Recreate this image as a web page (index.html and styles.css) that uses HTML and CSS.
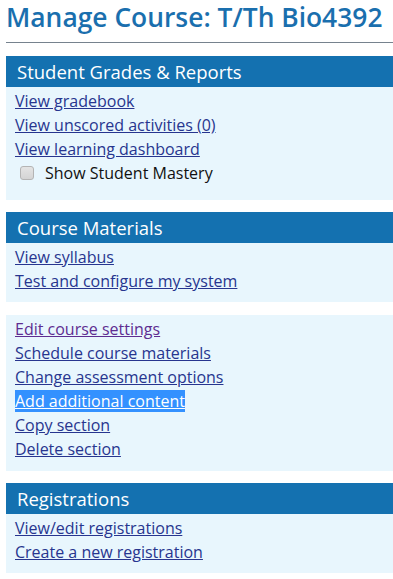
FILE: index.html
```html
<!DOCTYPE html>
<html lang="en">
<head>
    <meta charset="UTF-8">
    <meta name="viewport" content="width=device-width, initial-scale=1.0">
    <title>Manage Course - T/Th Bio4392</title>
    <link rel="stylesheet" href="styles.css">
</head>
<body>
    <h1 class="page-title">Manage Course: T/Th Bio4392</h1>
    <hr class="title-rule">

    <div class="panel">
        <h2 class="panel-head">Student Grades &amp; Reports</h2>
        <ul class="panel-links">
            <li><a href="#gradebook">View gradebook</a></li>
            <li><a href="#unscored">View unscored activities (0)</a></li>
            <li><a href="#dashboard">View learning dashboard</a></li>
            <li class="check-row">
                <label><input type="checkbox" class="mastery-box"> Show Student Mastery</label>
            </li>
        </ul>
    </div>

    <div class="panel">
        <h2 class="panel-head">Course Materials</h2>
        <ul class="panel-links">
            <li><a href="#syllabus">View syllabus</a></li>
            <li><a href="#system">Test and configure my system</a></li>
        </ul>
    </div>

    <div class="panel panel-plain">
        <ul class="panel-links">
            <li><a href="#settings" class="visited">Edit course settings</a></li>
            <li><a href="#schedule">Schedule course materials</a></li>
            <li><a href="#assessment">Change assessment options</a></li>
            <li><a href="#content" class="selected">Add additional content</a></li>
            <li><a href="#copy">Copy section</a></li>
            <li><a href="#delete">Delete section</a></li>
        </ul>
    </div>

    <div class="panel">
        <h2 class="panel-head">Registrations</h2>
        <ul class="panel-links">
            <li><a href="#registrations">View/edit registrations</a></li>
            <li><a href="#new-registration">Create a new registration</a></li>
        </ul>
    </div>
</body>
</html>
```

FILE: styles.css
```css
body {
    font-family: "Open Sans", "Liberation Sans", sans-serif;
    margin: 0;
    padding: 0 0 0 6px;
    background: #ffffff;
    color: #111111;
    overflow: hidden;
}
.page-title {
    margin: 0;
    padding-top: 1px;
    font-size: 26.4px;
    line-height: 32px;
    font-weight: 600;
    color: #1a6fae;
    white-space: nowrap;
}
.title-rule {
    margin: 9px 0 13px 0;
    border: none;
    border-top: 1px solid #76828e;
    height: 0;
}
.panel {
    background: #e8f6fd;
    margin-bottom: 12px;
}
.panel-plain {
    margin-top: 13px;
}
.panel-plain .panel-links {
    padding-bottom: 10px;
}
.panel-head {
    margin: 0;
    background: #1471b0;
    color: #ffffff;
    font-size: 18.5px;
    font-weight: 400;
    line-height: 31px;
    padding-left: 11px;
}
.panel-links {
    list-style-type: none;
    margin: 0;
    padding: 2px 0 9px 9px;
}
.panel-links li {
    line-height: 24px;
    font-size: 16px;
}
.panel-links a {
    color: #27358f;
    text-decoration: underline;
}
.panel-links a.visited {
    color: #5e2d91;
}
.panel-links a.selected {
    background: #3391ff;
    color: #ffffff;
}
.check-row {
    padding: 0 0 6px 5px;
}
.check-row label {
    display: flex;
    align-items: center;
    gap: 11px;
    color: #111111;
}
.mastery-box {
    appearance: none;
    -webkit-appearance: none;
    margin: 0;
    width: 14px;
    height: 14px;
    border: 1px solid #b4b4b4;
    border-radius: 3px;
    background: linear-gradient(#e4e4e4, #d4d4d4);
}
```
